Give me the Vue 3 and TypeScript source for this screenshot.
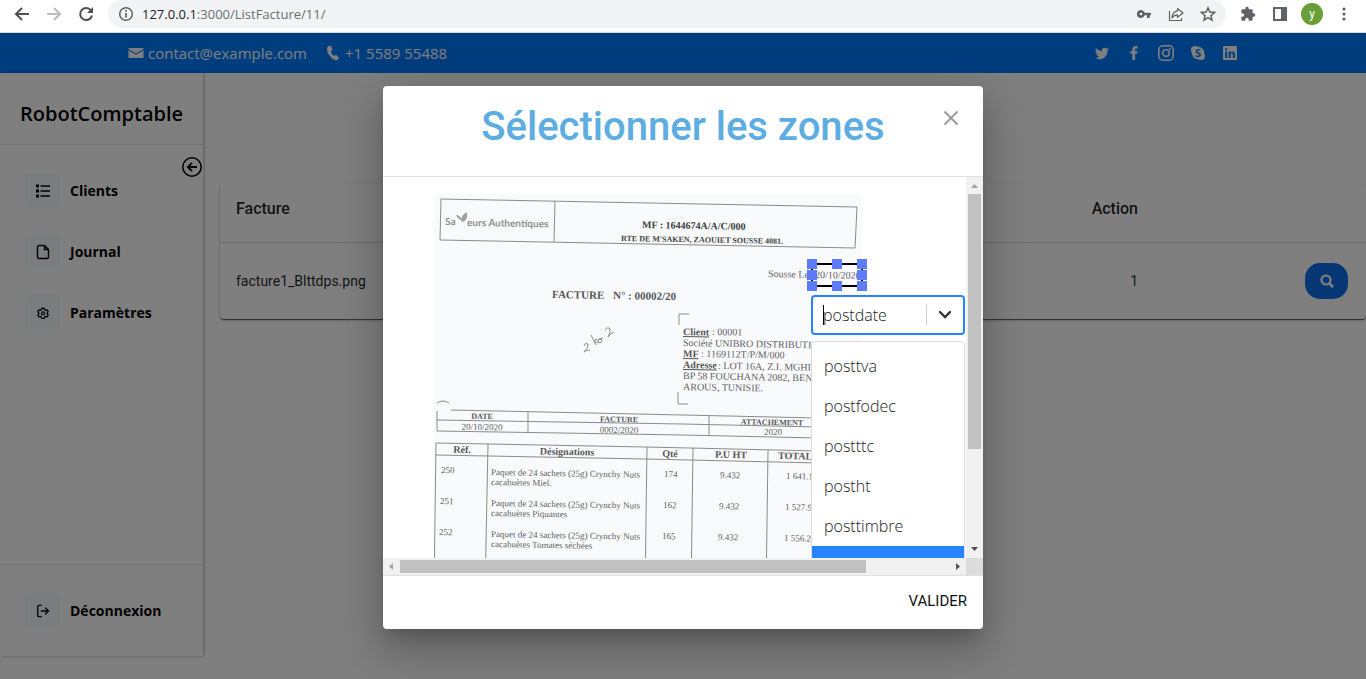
<script setup lang="ts">
import { ref } from 'vue'

interface DocText {
  x: number
  y: number
  s: number
  t: string
  b?: boolean
  u?: boolean
  mid?: boolean
}

const zone = ref('postdate')
const options = ['posttva', 'postfodec', 'postttc', 'postht', 'posttimbre', 'postdate']

const menu = [
  { label: 'Clients', icon: 'list' },
  { label: 'Journal', icon: 'file' },
  { label: 'Paramètres', icon: 'gear' }
]

const handles = ['nw', 'n', 'ne', 'w', 'e', 'sw', 's', 'se']

const lines: string[] = [
  'M7 5L423 13L421 54L6 46Z',
  'M121 7L120 48',
  'M245 131L245 120L255 120',
  'M244 198L244 210L254 210',
  'M3 209Q9 205 15 209',
  'M3 217L3 237L249 241L428 245',
  'M17 216L249 221L428 225',
  'M3 226L249 230L428 234',
  'M94 218L94 239',
  'M275 222L275 242',
  'M2 249L212 253L428 258',
  'M2 261L212 265L428 270',
  'M2 249L0 400',
  'M54 250L51 400',
  'M213 253L211 400',
  'M259 254L257 400',
  'M334 256L332 400'
]

const texts: DocText[] = [
  { x: 334, y: 83, s: 10, t: 'Sousse Le' },
  { x: 381, y: 84, s: 10, t: '20/10/2020' },
  { x: 118, y: 104, s: 11, t: 'FACTURE', b: true },
  { x: 179, y: 105, s: 11, t: 'N° : 00002/20', b: true },
  { x: 249, y: 141, s: 10, t: 'Client', b: true, u: true },
  { x: 278, y: 141, s: 10, t: ': 00001' },
  { x: 249, y: 152, s: 10, t: 'Société UNIBRO DISTRIBUTION' },
  { x: 249, y: 163, s: 10, t: 'MF', b: true, u: true },
  { x: 267, y: 163, s: 10, t: ': 1169112T/P/M/000' },
  { x: 249, y: 174, s: 10, t: 'Adresse', b: true, u: true },
  { x: 284, y: 175, s: 10, t: ': LOT 16A, Z.I. MGHIRA' },
  { x: 249, y: 185, s: 10, t: 'BP 58 FOUCHANA 2082, BEN' },
  { x: 249, y: 196, s: 10, t: 'AROUS, TUNISIE.' },
  { x: 48, y: 225, s: 8, t: 'DATE', b: true, mid: true },
  { x: 185, y: 228, s: 8, t: 'FACTURE', b: true, mid: true },
  { x: 338, y: 231, s: 8, t: 'ATTACHEMENT', b: true, mid: true },
  { x: 48, y: 236, s: 9, t: '20/10/2020', mid: true },
  { x: 185, y: 239, s: 9, t: '0002/2020', mid: true },
  { x: 339, y: 241, s: 9, t: '2020', mid: true },
  { x: 28, y: 259, s: 10, t: 'Réf.', b: true, mid: true },
  { x: 133, y: 261, s: 10, t: 'Désignations', b: true, mid: true },
  { x: 236, y: 263, s: 10, t: 'Qté', b: true, mid: true },
  { x: 297, y: 264, s: 10, t: 'P.U HT', b: true, mid: true },
  { x: 344, y: 265, s: 10, t: 'TOTAL', b: true }
]

const rows = [
  { ref: '250', name: 'Miel.', qty: '174', total: '1 641.1', y: 279 },
  { ref: '251', name: 'Piquantes', qty: '162', total: '1 527.9', y: 310 },
  { ref: '252', name: 'Tomates séchées', qty: '165', total: '1 556.2', y: 341 }
]
rows.forEach((r, i) => {
  texts.push(
    { x: 7 - i, y: r.y, s: 9, t: r.ref },
    { x: 57, y: r.y + 2, s: 9, t: 'Paquet de 24 sachets (25g) Crynchy Nuts' },
    { x: 57, y: r.y + 12, s: 9, t: 'cacahuètes ' + r.name },
    { x: 230 - i, y: r.y + 4, s: 9, t: r.qty },
    { x: 286 - i, y: r.y + 5, s: 9, t: '9.432' },
    { x: 352 - i, y: r.y + 6, s: 9, t: r.total }
  )
})
</script>

<template>
  <div class="window">
    <header class="browser">
      <button class="nav" aria-label="Précédent">
        <svg width="16" height="16" viewBox="0 0 16 16"><path d="M15 8H2M8 2L2 8l6 6" fill="none" stroke="#4d5156" stroke-width="2" /></svg>
      </button>
      <button class="nav" aria-label="Suivant">
        <svg width="16" height="16" viewBox="0 0 16 16"><path d="M1 8h13M8 2l6 6-6 6" fill="none" stroke="#b9bbbe" stroke-width="2" /></svg>
      </button>
      <button class="nav" aria-label="Actualiser">
        <svg width="16" height="16" viewBox="0 0 16 16"><path d="M13 4.500A6 6 0 1 0 14 9.500" fill="none" stroke="#4d5156" stroke-width="2" /><path d="M15 1v6H9z" fill="#4d5156" /></svg>
      </button>
      <div class="address">
        <svg width="16" height="16" viewBox="0 0 16 16"><circle cx="8" cy="8" r="6.300" fill="none" stroke="#5f6368" stroke-width="1.500" /><path d="M8 7v4.500M8 4v1.700" stroke="#5f6368" stroke-width="1.700" /></svg>
        <span class="url"><span class="host">127.0.0.1</span>:3000/ListFacture/11/</span>
        <button class="tool" aria-label="Mots de passe">
          <svg width="16" height="16" viewBox="0 0 16 16"><path d="M5 4a4 4 0 1 0 3.700 5.300H11V12h2.700V9.300H15V6.700H8.700A4 4 0 0 0 5 4zm0 2.700a1.300 1.300 0 1 1 0 2.600 1.300 1.300 0 0 1 0-2.600z" fill="#5f6368" /></svg>
        </button>
        <button class="tool" aria-label="Partager">
          <svg width="16" height="16" viewBox="0 0 16 16"><path d="M1.500 5v9.500h12V12" fill="none" stroke="#5f6368" stroke-width="1.200" /><path d="M9.500 2.500L15 7l-5.500 4.300V8.800C7 8.800 5.500 9.600 4 11.800c.3-3.700 2-6.400 5.500-6.900z" fill="none" stroke="#5f6368" stroke-width="1.200" stroke-linejoin="round" /></svg>
        </button>
        <button class="tool" aria-label="Favori">
          <svg width="16" height="16" viewBox="0 0 16 16"><path d="M8 1.800l1.800 4.300 4.700.4-3.600 3.100 1.100 4.600L8 11.700l-4 2.500 1.100-4.600-3.600-3.100 4.700-.4z" fill="none" stroke="#5f6368" stroke-width="1.500" /></svg>
        </button>
      </div>
      <div class="extras">
        <button class="tool" aria-label="Extensions">
          <svg width="16" height="16" viewBox="0 0 24 24"><path d="M20.500 11H19V7a2 2 0 0 0-2-2h-4V3.500a2.500 2.500 0 0 0-5 0V5H4a2 2 0 0 0-2 2v3.800h1.500a2.700 2.700 0 0 1 0 5.400H2V20a2 2 0 0 0 2 2h3.800v-1.500a2.700 2.700 0 0 1 5.400 0V22H17a2 2 0 0 0 2-2v-4h1.500a2.500 2.500 0 0 0 0-5z" fill="#5f6368" /></svg>
        </button>
        <button class="tool" aria-label="Panneau latéral">
          <svg width="16" height="16" viewBox="0 0 16 16"><path d="M1 1h14v14H1zm2 2v10h6V3z" fill="#5f6368" fill-rule="evenodd" /></svg>
        </button>
        <button class="avatar" aria-label="Profil">y</button>
        <button class="tool" aria-label="Menu">
          <svg width="16" height="16" viewBox="0 0 16 16" fill="#5f6368"><circle cx="8" cy="3" r="1.600" /><circle cx="8" cy="8" r="1.600" /><circle cx="8" cy="13" r="1.600" /></svg>
        </button>
      </div>
    </header>

    <div class="page">
      <div class="topbar">
        <div class="container">
          <svg width="16" height="16" viewBox="0 0 16 16"><path d="M.5 3h15v1L8 8.500.5 4z M.5 5.200L8 9.800l7.500-4.600V13H.5z" fill="#fff" /></svg>
          <a class="contact mail" href="#contact">contact@example.com</a>
          <svg width="16" height="16" viewBox="0 0 16 16"><path d="M3.500 1L6 .8 7.500 5 5.700 6.500c.5 1.800 1.700 3.400 3.300 4.400l2-1.200 3 3-1.500 2.300c-1 .5-2.300.3-3.600-.4C5.500 12.500 2.500 8.500 2 4.500 1.900 3 2.300 1.700 3.500 1z" fill="#fff" /></svg>
          <a class="contact phone" href="#phone">+1 5589 55488</a>
          <nav class="social">
            <a href="#twitter" aria-label="Twitter"><svg width="14" height="14" viewBox="0 0 16 16"><path d="M5.026 15c6.038 0 9.341-5.003 9.341-9.334 0-.14 0-.282-.006-.422A6.685 6.685 0 0 0 16 3.542a6.658 6.658 0 0 1-1.889.518 3.301 3.301 0 0 0 1.447-1.817 6.533 6.533 0 0 1-2.087.793A3.286 3.286 0 0 0 7.875 6.030a9.325 9.325 0 0 1-6.767-3.429 3.289 3.289 0 0 0 1.018 4.382A3.323 3.323 0 0 1 .64 6.575v.045a3.288 3.288 0 0 0 2.632 3.218 3.203 3.203 0 0 1-.865.115 3.230 3.230 0 0 1-.614-.057 3.283 3.283 0 0 0 3.067 2.277A6.588 6.588 0 0 1 .78 13.580a6.320 6.320 0 0 1-.78-.045A9.344 9.344 0 0 0 5.026 15z" fill="#fff" /></svg></a>
            <a href="#facebook" aria-label="Facebook"><svg width="16" height="16" viewBox="0 0 16 16"><path d="M6.300 15V8.800H4.300V6.200h2V4.500C6.300 2.200 7.500 1 9.700 1h1.900v2.500h-1.300c-.9 0-1.200.4-1.200 1.200v1.500h2.500l-.4 2.600H9.100V15z" fill="#fff" /></svg></a>
            <a href="#instagram" aria-label="Instagram"><svg width="16" height="16" viewBox="0 0 16 16"><rect x=".8" y=".8" width="14.400" height="14.400" rx="4" fill="none" stroke="#fff" stroke-width="1.600" /><circle cx="8" cy="8" r="3.300" fill="none" stroke="#fff" stroke-width="1.600" /><circle cx="12" cy="4" r="1" fill="#fff" /></svg></a>
            <a href="#skype" aria-label="Skype"><svg width="16" height="16" viewBox="0 0 16 16"><circle cx="8" cy="8" r="6.200" fill="#fff" /><circle cx="5" cy="5" r="4" fill="#fff" /><circle cx="11" cy="11" r="4" fill="#fff" /><text x="8" y="12" text-anchor="middle" class="mark">S</text></svg></a>
            <a href="#linkedin" aria-label="LinkedIn"><svg width="16" height="16" viewBox="0 0 16 16"><rect x="1" y="1" width="14" height="14" rx="1" fill="#fff" /><path d="M3.200 6.500h2V13h-2z M3.200 3.200h2v2h-2z M6.700 6.500h1.900v1c1-1.600 4.300-1.500 4.300 1.500v4h-2V9.500c0-1.800-2.200-1.700-2.200 0V13h-2z" fill="#007bff" /></svg></a>
          </nav>
        </div>
      </div>

      <div class="content">
        <aside class="sidebar">
          <div class="brand">RobotComptable</div>
          <nav class="menu">
            <a v-for="m in menu" :key="m.label" class="item" href="#menu">
              <span class="tile">
                <svg v-if="m.icon === 'list'" width="16" height="16" viewBox="0 0 16 16"><path d="M1 1.500h3v3H1z M1 6.500h3v3H1z M1 11.500h3v3H1z" /><path d="M5.500 3H15M5.500 8H15M5.500 13H15" stroke="#000" stroke-width="1.700" /></svg>
                <svg v-else-if="m.icon === 'file'" width="16" height="16" viewBox="0 0 16 16"><path d="M4 1.500h5.500l4 4V13a1.500 1.500 0 0 1-1.500 1.500H4A1.500 1.500 0 0 1 2.500 13V3A1.500 1.500 0 0 1 4 1.500zM9.500 1.500V5.500h4" fill="none" stroke="#000" stroke-width="1.400" /></svg>
                <svg v-else width="12" height="12" viewBox="0 0 16 16"><path d="M6.500 1.500h3l.5 2 1.500.9 2-.6 1.500 2.600-1.500 1.400v1.400l1.500 1.400-1.500 2.600-2-.6-1.500.9-.5 2h-3l-.5-2-1.500-.9-2 .6L1 10.600l1.500-1.400V7.800L1 6.400l1.500-2.600 2 .6L6 3.500z" fill="none" stroke="#000" stroke-width="1.700" stroke-linejoin="round" /><circle cx="8" cy="8.500" r="2" fill="none" stroke="#000" stroke-width="1.600" /></svg>
              </span>
              {{ m.label }}
            </a>
          </nav>
          <div class="logout">
            <a class="item" href="#logout">
              <span class="tile"><svg width="14" height="14" viewBox="0 0 16 16"><path d="M6.500 1.500h-3A1.500 1.500 0 0 0 2 3v10a1.500 1.500 0 0 0 1.500 1.500h3M5.500 8H14M10.500 4.200L14.300 8l-3.800 3.800" fill="none" stroke="#000" stroke-width="1.500" /></svg></span>
              Déconnexion
            </a>
          </div>
          <button class="collapse" aria-label="Réduire le menu">
            <svg width="20" height="20" viewBox="0 0 20 20"><circle cx="10" cy="10" r="9.200" fill="none" stroke="#000" stroke-width="1.600" /><path d="M15 10H6M10 5.800L5.800 10l4.200 4.200" fill="none" stroke="#000" stroke-width="1.800" /></svg>
          </button>
        </aside>

        <main class="main">
          <table class="card">
            <thead>
              <tr><th>Facture</th><th class="num">Action</th><th class="act"></th></tr>
            </thead>
            <tbody>
              <tr>
                <td>facture1_Blttdps.png</td>
                <td class="num">1</td>
                <td class="act">
                  <button class="search" aria-label="Voir">
                    <svg width="16" height="16" viewBox="0 0 16 16"><circle cx="7" cy="7" r="4.500" fill="none" stroke="#fff" stroke-width="2.200" /><path d="M10.300 10.300L14 14" stroke="#fff" stroke-width="2.600" /></svg>
                  </button>
                </td>
              </tr>
            </tbody>
          </table>
        </main>
      </div>

      <div class="backdrop">
        <section class="dialog" role="dialog" aria-labelledby="dialog-title">
          <div class="dialog-head">
            <h2 id="dialog-title">Sélectionner les zones</h2>
            <button class="close" aria-label="Fermer">
              <svg width="16" height="16" viewBox="0 0 16 16"><path d="M1.500 1.500l13 13M14.500 1.500l-13 13" stroke="#999" stroke-width="1.800" /></svg>
            </button>
          </div>

          <div class="scroller">
            <div class="viewport">
              <div class="paper">
                <svg class="scan" width="428" height="606" viewBox="0 0 428 606">
                  <rect width="428" height="606" fill="#f9fafc" />
                  <path v-for="d in lines" :key="d" :d="d" fill="none" stroke="#8a8b8d" stroke-width="1" />
                  <text class="logo" transform="translate(11 31) rotate(1)">Sa</text>
                  <path d="M22 21q4 0 6 5q-4 0-6-5zM27 27q0-6 6-9q1 8-4 10z" fill="#a0a2a2" />
                  <text class="logo" transform="translate(33 32) rotate(1)">eurs Authentiques</text>
                  <text class="poster" font-size="10" transform="translate(208 34) rotate(1)">MF : 1644674A/A/C/000</text>
                  <text class="poster" font-size="8" transform="translate(187 47) rotate(1)">RTE DE M'SAKEN, ZAOUIET SOUSSE 4081.</text>
                  <path d="M150 152q1-4 4-2q1 3-4 8q2-2 6-2M157 141l5 10M163 145q-3 0-2 3q3 2 3-2q1-2 4 0q0 3-3 3q-2-2 0-4l4-1M171 136q3-4 5-1q1 3-2 8q1-3 6-5" fill="none" stroke="#8a8b8d" stroke-width="1" />
                  <text
                    v-for="(t, i) in texts"
                    :key="i"
                    class="typed"
                    :class="{ bold: t.b, under: t.u }"
                    :font-size="t.s"
                    :text-anchor="t.mid ? 'middle' : 'start'"
                    :transform="`translate(${t.x} ${t.y}) rotate(1)`"
                  >{{ t.t }}</text>
                </svg>
                <div class="zone">
                  <i v-for="h in handles" :key="h" :class="h"></i>
                </div>
                <div class="picker">
                  <div class="control">
                    <input v-model="zone" role="combobox" aria-label="Zone" aria-expanded="true" />
                    <span class="caret"></span>
                    <span class="sep"></span>
                    <button class="arrow" aria-label="Ouvrir la liste">
                      <svg width="14" height="10" viewBox="0 0 14 10"><path d="M2 2l5 5 5-5" fill="none" stroke="#333" stroke-width="2.400" stroke-linecap="round" /></svg>
                    </button>
                  </div>
                  <ul class="options" role="listbox">
                    <li v-for="o in options" :key="o" role="option" :aria-selected="o === zone" :class="{ selected: o === zone }">{{ o }}</li>
                  </ul>
                </div>
              </div>
            </div>
            <div class="bar vertical">
              <svg width="17" height="17" viewBox="0 0 17 17"><path d="M5 11h7L8.500 7z" fill="#a3a3a3" /></svg>
              <span class="thumb"></span>
              <svg width="17" height="17" viewBox="0 0 17 17"><path d="M5 6h7l-3.500 4z" fill="#505050" /></svg>
            </div>
            <div class="bar horizontal">
              <svg width="17" height="17" viewBox="0 0 17 17"><path d="M10 5v7L6 8.500z" fill="#a3a3a3" /></svg>
              <span class="thumb"></span>
              <svg width="17" height="17" viewBox="0 0 17 17"><path d="M7 5v7l4-3.500z" fill="#505050" /></svg>
            </div>
            <div class="corner"></div>
          </div>

          <div class="dialog-foot">
            <button class="validate">VALIDER</button>
          </div>
        </section>
      </div>
    </div>
  </div>
</template>

<style scoped>
* {
  box-sizing: border-box;
}
button {
  padding: 0;
  border: 0;
  background: none;
  font: inherit;
  color: inherit;
  cursor: pointer;
}
a {
  color: inherit;
  text-decoration: none;
}
svg {
  display: block;
  flex: none;
}
.window {
  display: flex;
  flex-direction: column;
  height: 100vh;
  overflow: hidden;
  font-family: 'Open Sans', 'Noto Sans', sans-serif;
}
.browser {
  display: flex;
  align-items: flex-start;
  height: 33px;
  border-bottom: 1px solid #d5d7da;
  background: #fff;
  padding-left: 14px;
}
.nav {
  width: 16px;
  height: 28px;
  margin-right: 16px;
}
.address {
  flex: 1;
  display: flex;
  align-items: center;
  height: 28px;
  padding: 0 10px;
  margin-left: -2px;
  border-radius: 14px;
  background: #f1f3f4;
}
.url {
  flex: 1;
  margin-left: 8px;
  font-size: 13px;
  color: #6b6f74;
}
.host {
  color: #202124;
}
.tool {
  width: 16px;
  height: 16px;
}
.address .tool {
  margin-left: 16px;
}
.extras {
  display: flex;
  align-items: center;
  gap: 16px;
  height: 28px;
  padding: 0 14px;
}
.extras .avatar {
  width: 22px;
  height: 22px;
  margin: 0 -3px;
  border-radius: 50%;
  background: #689f38;
  color: #fff;
  font: 12px/20px Roboto, sans-serif;
}
.page {
  position: relative;
  flex: 1;
  min-height: 0;
  display: flex;
  flex-direction: column;
  background: #fff;
}
.topbar {
  flex: none;
  height: 40px;
  background: #007bff;
  color: #fff;
}
.container {
  display: flex;
  align-items: center;
  max-width: 1140px;
  height: 40px;
  margin: 0 auto;
  padding: 0 15px;
}
.contact {
  margin-left: 4px;
  font-size: 15px;
}
.mail {
  margin-right: 18px;
}
.social {
  display: flex;
  gap: 16px;
  margin-left: auto;
}
.social a {
  display: flex;
  align-items: center;
  justify-content: center;
  width: 16px;
}
.mark {
  font: bold 11px 'Open Sans', sans-serif;
  fill: #007bff;
}
.content {
  flex: 1;
  min-height: 0;
  display: flex;
}
.sidebar {
  position: relative;
  display: flex;
  flex-direction: column;
  width: 203px;
  margin-bottom: 23px;
  box-shadow: 1px 0 3px rgba(0, 0, 0, 0.3);
  font-weight: 600;
}
.brand {
  height: 72px;
  padding: 27px 20px 0;
  border-bottom: 1px solid #e4e4e4;
  font-size: 20px;
  line-height: 28px;
}
.menu {
  flex: 1;
  display: flex;
  flex-direction: column;
  gap: 26px;
  padding: 28px 25px;
}
.item {
  display: flex;
  align-items: center;
  gap: 10px;
  font-size: 14px;
  font-weight: 700;
}
.tile {
  display: flex;
  align-items: center;
  justify-content: center;
  width: 35px;
  height: 35px;
  border-radius: 4px;
  background: #f5fafa;
}
.logout {
  padding: 28px 25px;
  border-top: 1px solid #e4e4e4;
}
.collapse {
  position: absolute;
  top: 84px;
  right: 1px;
  border-radius: 50%;
}
.main {
  flex: 1;
  padding: 110px 0 0 17px;
}
.card {
  width: 100%;
  border-collapse: collapse;
  border-radius: 4px;
  box-shadow: 0 2px 1px -1px rgba(0, 0, 0, 0.4), 0 1px 1px rgba(0, 0, 0, 0.28), 0 1px 3px rgba(0, 0, 0, 0.24);
  font-family: Roboto, sans-serif;
  color: rgba(0, 0, 0, 0.87);
}
.card th {
  height: 59px;
  padding: 0 16px 8px;
  border-bottom: 1px solid #d8d8d8;
  text-align: left;
  font-size: 16px;
  font-weight: 500;
}
.card td {
  height: 77px;
  padding: 0 16px;
  font-size: 14px;
}
.card .num {
  text-align: right;
}
.card .act {
  width: 212px;
  padding-right: 18px;
}
.search {
  display: flex;
  align-items: center;
  justify-content: center;
  width: 43px;
  height: 36px;
  margin-left: auto;
  border-radius: 15px;
  background: #106eea;
}
.backdrop {
  position: absolute;
  inset: 0;
  display: flex;
  justify-content: center;
  padding: 53px 0 50px;
  background: rgba(0, 0, 0, 0.5);
}
.dialog {
  display: flex;
  flex-direction: column;
  width: 100%;
  max-width: 600px;
  border-radius: 4px;
  background: #fff;
  box-shadow: 0 11px 15px -7px rgba(0, 0, 0, 0.2), 0 24px 38px 3px rgba(0, 0, 0, 0.14), 0 9px 46px 8px rgba(0, 0, 0, 0.12);
  font-family: Roboto, sans-serif;
}
.dialog-head {
  position: relative;
  flex: none;
  height: 91px;
  padding-top: 17px;
  border-bottom: 1px solid #e0e0e0;
}
.dialog-head h2 {
  margin: 0;
  text-align: center;
  font-size: 40px;
  font-weight: 500;
  line-height: 48px;
  color: #5dade2;
}
.close {
  position: absolute;
  top: 24px;
  right: 24px;
}
.scroller {
  flex: 1;
  min-height: 0;
  display: grid;
  grid-template: 1fr 17px / 1fr 17px;
}
.viewport {
  min-height: 0;
  overflow: hidden;
  padding: 17px 0 0 51px;
}
.paper {
  position: relative;
  width: 428px;
  height: 0;
}
.typed {
  font-family: 'Liberation Serif', serif;
  fill: #5f6164;
}
.bold {
  font-weight: 700;
  fill: #55575a;
}
.under {
  text-decoration: underline;
}
.logo {
  font: 700 10px Lato, sans-serif;
  fill: #8d9090;
}
.poster {
  font-family: 'Liberation Serif', serif;
  font-weight: 700;
  fill: #3d3f41;
}
.zone {
  position: absolute;
  left: 377px;
  top: 69px;
  width: 52px;
  height: 24px;
  border: 2px solid #000;
}
.zone i {
  position: absolute;
  width: 10px;
  height: 10px;
  background: #5e7cfa;
}
.n,
.s {
  left: 19px;
}
.w,
.e {
  top: 5px;
}
.nw,
.w,
.sw {
  left: -6px;
}
.ne,
.e,
.se {
  right: -6px;
}
.nw,
.n,
.ne {
  top: -6px;
}
.sw,
.s,
.se {
  bottom: -6px;
}
.picker {
  position: absolute;
  left: 377px;
  top: 101px;
  width: 154px;
  font-family: 'Open Sans', 'Noto Sans', sans-serif;
  font-size: 16px;
  font-weight: 300;
  color: #222;
}
.control {
  position: relative;
  display: flex;
  align-items: center;
  height: 40px;
  border: 2px solid #2684ff;
  border-radius: 4px;
  background: #fff;
}
.control input {
  flex: 1;
  min-width: 0;
  padding: 0 0 0 10px;
  border: 0;
  outline: 0;
  background: none;
  font: inherit;
  color: inherit;
}
.caret {
  position: absolute;
  left: 10px;
  top: 8px;
  width: 1px;
  height: 20px;
  background: #000;
}
.sep {
  width: 1px;
  height: 20px;
  background: #ccc;
}
.arrow {
  display: flex;
  justify-content: center;
  width: 36px;
}
.options {
  margin: 6px 0 0;
  padding: 4px 0;
  border: 1px solid #dcdcdc;
  border-radius: 4px;
  background: #fff;
  list-style: none;
}
.options li {
  height: 40px;
  padding: 0 12px;
  line-height: 40px;
}
.options .selected {
  background: #2684ff;
  color: #fff;
}
.bar {
  display: flex;
  background: #f1f1f1;
}
.vertical {
  flex-direction: column;
  justify-content: space-between;
}
.horizontal {
  justify-content: space-between;
}
.thumb {
  background: #c1c1c1;
}
.vertical .thumb {
  width: 13px;
  height: 67%;
  margin: 0 2px auto;
}
.horizontal .thumb {
  width: 80%;
  height: 13px;
  margin: 2px auto 2px 0;
}
.corner {
  background: #dcdcdc;
}
.dialog-foot {
  flex: none;
  display: flex;
  align-items: flex-start;
  justify-content: flex-end;
  height: 54px;
  padding: 13px 16px 0;
  border-top: 1px solid #e0e0e0;
}
.validate {
  font-size: 15px;
  font-weight: 400;
  line-height: 24px;
  color: #111;
}
</style>
<style>
body {
  margin: 0;
}
</style>
